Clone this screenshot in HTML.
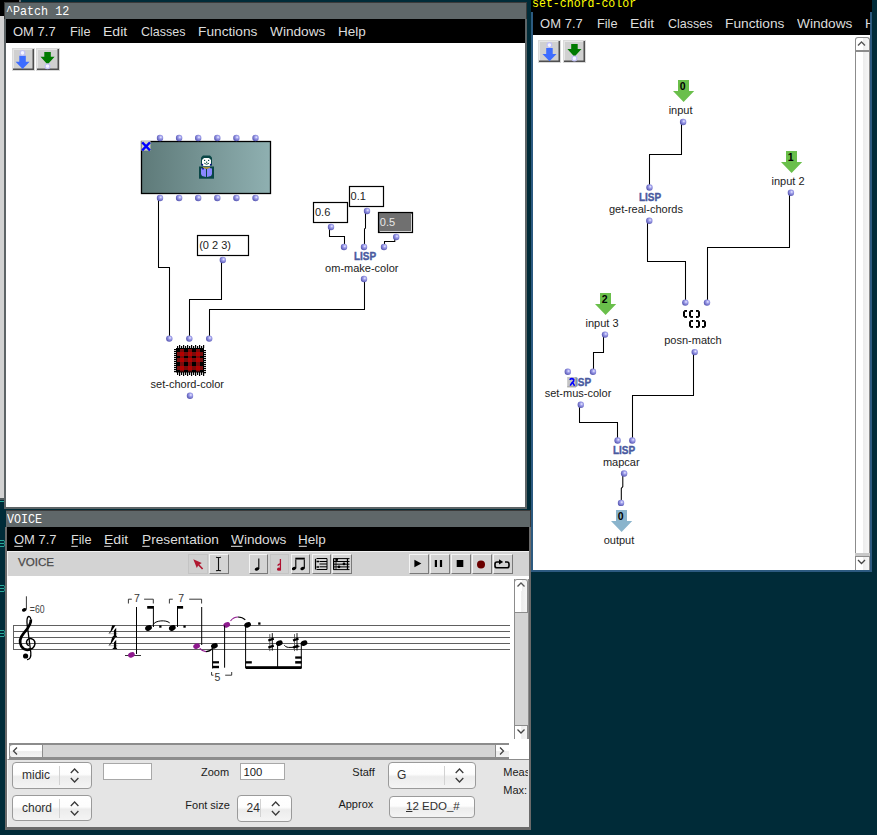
<!DOCTYPE html>
<html><head><meta charset="utf-8">
<style>
*{margin:0;padding:0;box-sizing:border-box}
html,body{width:877px;height:835px;overflow:hidden;background:#002b38;font-family:"Liberation Sans",sans-serif}
.a{position:absolute}
.t{position:absolute;white-space:nowrap;line-height:1}
.mono{font-family:"Liberation Mono",monospace}
.menu{color:#dcdcdc;font-size:13px}
.btn{position:absolute;background:#d0d0d0;border:1px solid #dadada;box-shadow:inset -1.5px -1.5px 0 #4e4e4e, inset 1px 1px 0 #e6e6e6}
.tb{position:absolute;background:#d4d4d4;border-top:1px solid #f4f4f4;border-left:1px solid #f4f4f4;border-right:1px solid #7a7a7a;border-bottom:1px solid #7a7a7a}
.tbp{position:absolute;background:#d0d0d0;border:1px solid #c4c4c4}
.lbl{color:#1e1e1e;font-size:12px}
.combo{position:absolute;border:1px solid #9a9a9a;border-radius:4px;background:linear-gradient(#ffffff 0%,#fdfdfd 45%,#ececec 55%,#f4f4f4 100%)}
</style></head><body>

<!-- top-left black strip -->
<div class="a" style="left:0;top:0;width:19px;height:16px;background:#000"></div>
<div class="a" style="left:19px;top:0;width:2px;height:3px;background:#6a7072"></div>
<div class="a" style="left:0;top:16px;width:4px;height:482px;background:#d2d2d2"></div>
<div class="a" style="left:0;top:498px;width:4px;height:1.5px;background:#505a5c"></div>
<div class="a" style="left:0;top:501px;width:4px;height:1px;background:#2aa89a"></div>

<!-- ================= PATCH 12 WINDOW ================= -->
<div class="a" style="left:4px;top:2px;width:523px;height:18px;background:#5f6769;border:1px solid #3a3a3a"></div>
<div class="t mono" style="left:6px;top:5px;font-size:13px;color:#fff;transform:scaleX(0.9);transform-origin:0 0">^Patch 12</div>
<div class="a" style="left:4px;top:19px;width:523px;height:489.7px;background:#5d6466"></div>
<div class="a" style="left:6px;top:19px;width:519px;height:24px;background:#000"></div>
<div class="a" style="left:6px;top:43px;width:519px;height:464px;background:#fff"></div>
<div class="t menu" style="left:13.0px;top:25px;transform:scaleX(1.0);transform-origin:0 0">OM 7.7</div>
<div class="t menu" style="left:70.0px;top:25px;transform:scaleX(0.98);transform-origin:0 0">File</div>
<div class="t menu" style="left:103.1px;top:25px;transform:scaleX(1.08);transform-origin:0 0">Edit</div>
<div class="t menu" style="left:141.0px;top:25px;transform:scaleX(0.96);transform-origin:0 0">Classes</div>
<div class="t menu" style="left:197.9px;top:25px;transform:scaleX(1.055);transform-origin:0 0">Functions</div>
<div class="t menu" style="left:270.0px;top:25px;transform:scaleX(1.05);transform-origin:0 0">Windows</div>
<div class="t menu" style="left:337.7px;top:25px;transform:scaleX(1.04);transform-origin:0 0">Help</div>
<div class="btn" style="left:11.5px;top:48.2px;width:23px;height:23.2px"></div>
<div class="btn" style="left:36.4px;top:48.2px;width:23.3px;height:23.2px"></div>

<!-- ================= RIGHT WINDOW set-chord-color ================= -->
<div class="a" style="left:531px;top:0;width:341px;height:12px;background:#000"></div>
<div class="t mono" style="left:532.3px;top:-2.5px;font-size:12.5px;color:#ffff00;transform:scaleX(0.925);transform-origin:0 0">set-chord-color</div>
<div class="a" style="left:531px;top:12px;width:341px;height:560px;background:#2c5a80"></div>
<div class="a" style="left:533px;top:12px;width:337px;height:23px;background:#000"></div>
<div class="a" style="left:533px;top:35px;width:337px;height:535px;background:#fff"></div>
<div class="t menu" style="left:540.1px;top:17px;transform:scaleX(1.0);transform-origin:0 0">OM 7.7</div>
<div class="t menu" style="left:597.1px;top:17px;transform:scaleX(0.98);transform-origin:0 0">File</div>
<div class="t menu" style="left:630.1999999999999px;top:17px;transform:scaleX(1.08);transform-origin:0 0">Edit</div>
<div class="t menu" style="left:668.0999999999999px;top:17px;transform:scaleX(0.96);transform-origin:0 0">Classes</div>
<div class="t menu" style="left:725.0px;top:17px;transform:scaleX(1.055);transform-origin:0 0">Functions</div>
<div class="t menu" style="left:797.0999999999999px;top:17px;transform:scaleX(1.05);transform-origin:0 0">Windows</div>
<div class="t menu" style="left:864.8px;top:17px;transform:scaleX(1.04);transform-origin:0 0;width:5.3px;overflow:hidden">Help</div>
<div class="btn" style="left:538.4px;top:40.4px;width:22.7px;height:22.7px"></div>
<div class="btn" style="left:563.4px;top:40.4px;width:22.9px;height:22.7px"></div>


<!-- ================= VOICE WINDOW ================= -->
<div class="a" style="left:6px;top:510px;width:524.7px;height:18px;background:#5f6769;border:1px solid #3a3a3a;border-left:none"></div>
<div class="t mono" style="left:7px;top:513px;font-size:13px;color:#fff;transform:scaleX(0.9);transform-origin:0 0">VOICE</div>
<div class="a" style="left:5px;top:527px;width:526px;height:303px;background:#6a6a6a"></div>
<div class="a" style="left:7px;top:527px;width:522px;height:24px;background:#000"></div>
<div class="t menu" style="left:13.9px;top:533px;transform:scaleX(1.0);transform-origin:0 0">OM 7.7</div>
<div class="t menu" style="left:70.89999999999999px;top:533px;transform:scaleX(0.98);transform-origin:0 0">File</div>
<div class="t menu" style="left:103.6px;top:533px;transform:scaleX(1.08);transform-origin:0 0">Edit</div>
<div class="t menu" style="left:141.6px;top:533px;transform:scaleX(1.053);transform-origin:0 0">Presentation</div>
<div class="t menu" style="left:230.6px;top:533px;transform:scaleX(1.05);transform-origin:0 0">Windows</div>
<div class="t menu" style="left:298.40000000000003px;top:533px;transform:scaleX(1.04);transform-origin:0 0">Help</div>
<!-- toolbar -->
<div class="a" style="left:7px;top:551px;width:522px;height:26px;background:#d3d3d3;border-top:1.5px solid #f0f0f0;border-left:1.5px solid #f0f0f0;border-bottom:1.5px solid #777"></div>
<div class="t" style="left:18px;top:556px;font-size:11.6px;color:#4a4a4a;-webkit-text-stroke:0.25px #4a4a4a">VOICE</div>
<div class="tb" style="left:209px;top:554px;width:19.5px;height:19.5px"></div>
<div class="tb" style="left:248.5px;top:554px;width:19.5px;height:19.5px"></div>
<div class="tb" style="left:290.5px;top:554px;width:19.5px;height:19.5px"></div>
<div class="tb" style="left:311.5px;top:554px;width:19.5px;height:19.5px"></div>
<div class="tb" style="left:332px;top:554px;width:19.5px;height:19.5px"></div>
<div class="tb" style="left:409px;top:554px;width:19.5px;height:19.5px"></div>
<div class="tb" style="left:430px;top:554px;width:19.5px;height:19.5px"></div>
<div class="tb" style="left:451px;top:554px;width:19.5px;height:19.5px"></div>
<div class="tb" style="left:472px;top:554px;width:19.5px;height:19.5px"></div>
<div class="tb" style="left:493px;top:554px;width:19.5px;height:19.5px"></div>
<div class="tbp" style="left:188px;top:554px;width:19.5px;height:19.5px"></div>
<div class="tbp" style="left:269.5px;top:554px;width:19.5px;height:19.5px"></div>
<!-- score area -->
<div class="a" style="left:7px;top:576px;width:522px;height:183px;background:#fff"></div>

<!-- VOICE vertical scrollbar -->
<div class="a" style="left:513.5px;top:578.5px;width:15px;height:160px;background:#d4d4d4;border-left:1.5px solid #8c8c8c;border-right:1.5px solid #8c8c8c"></div>
<div class="a" style="left:514px;top:578.5px;width:14px;height:13px;background:linear-gradient(90deg,#fff 55%,#ececec 60%,#f6f6f6);border:1.5px solid #8c8c8c;border-top-left-radius:3px;border-top-right-radius:3px"></div>
<div class="a" style="left:514px;top:591px;width:14px;height:21.5px;background:linear-gradient(90deg,#fff 50%,#ececec 55%,#f6f6f6);border:1.5px solid #8c8c8c;border-top:none"></div>
<div class="a" style="left:514px;top:725px;width:14px;height:13.5px;background:linear-gradient(90deg,#fff 50%,#ececec 55%,#f6f6f6);border:1.5px solid #8c8c8c;border-bottom:none"></div>
<!-- VOICE horizontal scrollbar -->
<div class="a" style="left:8.5px;top:743px;width:500.5px;height:16px;background:#d4d4d4;border-top:2px solid #8c8c8c;border-bottom:2px solid #8c8c8c"></div>
<div class="a" style="left:8.5px;top:743px;width:13px;height:16px;background:linear-gradient(#fff 45%,#ececec 55%,#f4f4f4);border:1.5px solid #8c8c8c;border-top-width:2px;border-bottom-width:2px;border-top-left-radius:4px;border-bottom-left-radius:4px"></div>
<div class="a" style="left:21px;top:743px;width:22px;height:16px;background:linear-gradient(#fff 45%,#ececec 55%,#f4f4f4);border:1.5px solid #8c8c8c;border-left:none;border-top-width:2px;border-bottom-width:2px"></div>
<div class="a" style="left:495px;top:743px;width:14px;height:16px;background:linear-gradient(#fff 45%,#ececec 55%,#f4f4f4);border-left:1.5px solid #8c8c8c;border-top:2px solid #8c8c8c;border-bottom:2px solid #8c8c8c"></div>
<!-- right window scrollbar -->
<div class="a" style="left:854.5px;top:36.5px;width:15px;height:533.5px;background:linear-gradient(90deg,#fff 50%,#ececec 55%,#f6f6f6);border-left:1.5px solid #8c8c8c;border-right:1.5px solid #8c8c8c;border-top-left-radius:3px;border-top-right-radius:3px;border-top:1.5px solid #8c8c8c"></div>
<div class="a" style="left:854.5px;top:50px;width:15px;height:1.5px;background:#8c8c8c"></div>
<div class="a" style="left:854.5px;top:553px;width:15px;height:2.5px;background:#c8c8c8"></div>
<div class="a" style="left:854.5px;top:555.5px;width:15px;height:1.2px;background:#8c8c8c"></div>

<!-- bottom panel -->
<div class="a" style="left:7px;top:759px;width:521.5px;height:68px;background:#e5e5e5;border-top:1.5px solid #8c8c8c;border-left:1.5px solid #f4f4f4"></div>
<div class="combo" style="left:12.2px;top:762.4px;width:79.4px;height:26.3px"></div>
<div class="a" style="left:59px;top:766px;width:1px;height:19px;background:#d2d2d2"></div>
<div class="t" style="left:22px;top:768.8px;font-size:12px;color:#303030">midic</div>
<div class="combo" style="left:12.2px;top:795.3px;width:79.4px;height:26.2px"></div>
<div class="a" style="left:59px;top:799px;width:1px;height:19px;background:#d2d2d2"></div>
<div class="t" style="left:22px;top:801.5px;font-size:12px;color:#303030">chord</div>
<div class="a" style="left:102.5px;top:762.7px;width:49.8px;height:17.5px;background:#fff;border:1.5px solid #a8a8a8"></div>
<div class="t" style="left:201px;top:766.7px;font-size:11px;color:#1a1a1a">Zoom</div>
<div class="a" style="left:239.9px;top:762.7px;width:45.6px;height:17.5px;background:#fff;border:1.5px solid #a8a8a8"></div>
<div class="t" style="left:243.5px;top:766.7px;font-size:11.3px;color:#1a1a1a">100</div>
<div class="t" style="left:185.3px;top:799.7px;font-size:11px;color:#1a1a1a">Font size</div>
<div class="combo" style="left:237.1px;top:794.9px;width:55.4px;height:26.7px"></div>
<div class="t" style="left:246.5px;top:802px;font-size:12px;color:#303030">24</div>
<div class="a" style="left:260.3px;top:799px;width:1px;height:18px;background:#d2d2d2"></div>
<div class="t" style="left:352.3px;top:766.7px;font-size:11px;color:#1a1a1a">Staff</div>
<div class="combo" style="left:387.5px;top:762.3px;width:88.9px;height:26.5px"></div>
<div class="a" style="left:444.3px;top:766px;width:1px;height:19px;background:#d2d2d2"></div>
<div class="t" style="left:397px;top:769px;font-size:12px;color:#303030">G</div>
<div class="t" style="left:338.4px;top:799.3px;font-size:11px;color:#1a1a1a">Approx</div>
<div class="combo" style="left:388.6px;top:795.6px;width:86.9px;height:22.1px"></div>
<div class="t" style="left:406px;top:800.5px;font-size:11.5px;color:#303030"><span style="text-decoration:underline">1</span>2 EDO_#</div>
<div class="t" style="left:503.3px;top:766.7px;font-size:11px;color:#1a1a1a;width:25px;overflow:hidden">Measure</div>
<div class="t" style="left:503.3px;top:784.9px;font-size:11px;color:#1a1a1a">Max:</div>


<svg class="a" style="left:0;top:0" width="877" height="835" viewBox="0 0 877 835">
<defs>
<radialGradient id="bg" cx="0.62" cy="0.38" r="0.62"><stop offset="0" stop-color="#eeeeff"/><stop offset="0.35" stop-color="#a4a4ee"/><stop offset="1" stop-color="#5a5ab4"/></radialGradient>
<linearGradient id="boxg" x1="0" x2="1" y1="0" y2="0"><stop offset="0" stop-color="#5e7a79"/><stop offset="1" stop-color="#8fb0b1"/></linearGradient>
</defs>
<g font-family="Liberation Sans" font-size="11" fill="#222">
<path d="M158.5 198 V267.5 H169.5 V338" fill="none" stroke="#000" stroke-width="1.05"/>
<path d="M221.5 260 V299.5 H189.5 V338" fill="none" stroke="#000" stroke-width="1.05"/>
<path d="M364.5 279 V309.5 H209.5 V338" fill="none" stroke="#000" stroke-width="1.05"/>
<path d="M329.5 227 V236.5 H344.5 V247" fill="none" stroke="#000" stroke-width="1.05"/>
<path d="M365.5 211 V228 L364.5 229 V247" fill="none" stroke="#000" stroke-width="1.05"/>
<path d="M394.8 237 V241.5 H384.5 V247" fill="none" stroke="#000" stroke-width="1.05"/>
<rect x="141.5" y="141.5" width="129" height="52" fill="url(#boxg)" stroke="#000" stroke-width="1.3"/>
<circle cx="160.0" cy="138" r="3.2" fill="url(#bg)"/>
<circle cx="160.0" cy="198" r="3.2" fill="url(#bg)"/>
<circle cx="179.1" cy="138" r="3.2" fill="url(#bg)"/>
<circle cx="179.1" cy="198" r="3.2" fill="url(#bg)"/>
<circle cx="198.2" cy="138" r="3.2" fill="url(#bg)"/>
<circle cx="198.2" cy="198" r="3.2" fill="url(#bg)"/>
<circle cx="217.3" cy="138" r="3.2" fill="url(#bg)"/>
<circle cx="217.3" cy="198" r="3.2" fill="url(#bg)"/>
<circle cx="236.4" cy="138" r="3.2" fill="url(#bg)"/>
<circle cx="236.4" cy="198" r="3.2" fill="url(#bg)"/>
<circle cx="255.5" cy="138" r="3.2" fill="url(#bg)"/>
<circle cx="255.5" cy="198" r="3.2" fill="url(#bg)"/>
<rect x="141.3" y="141" width="9.2" height="9.6" fill="#cfcfc4"/><path d="M142.2 142.4 L150 150.4 M150 142.4 L142.2 150.4" stroke="#0000ff" stroke-width="2.3"/>
<g>
<path d="M203 155.5 H210 L212 157.5 V165.5 H201 V157.5Z" fill="#0a4646"/>
<path d="M204 158 H209 L211 160 V164 L209.5 166 H203.5 L202 164 V160Z" fill="#fff"/>
<rect x="204" y="159.8" width="1.2" height="1.2" fill="#0a4646"/><rect x="208" y="159.8" width="1.2" height="1.2" fill="#0a4646"/>
<rect x="206" y="161.6" width="1.2" height="1.2" fill="#0a4646"/>
<path d="M204.2 163.2 Q206.6 165.4 209 163.2" stroke="#0a4646" stroke-width="0.9" fill="none"/>
<circle cx="202.3" cy="164.6" r="0.9" fill="#10108a"/><circle cx="210.8" cy="164.6" r="0.9" fill="#10108a"/>
<rect x="199" y="166.5" width="15" height="12.2" fill="#0a4646"/>
<rect x="203" y="167" width="7" height="2" fill="#a89038"/>
<path d="M201 168.5 L203.5 168 L206 169 V177 L202 176 L201 174Z" fill="#8a88ff"/>
<path d="M212 168.5 L209.5 168 L207 169 V177 L211 176 L212 174Z" fill="#8a88ff"/>
<rect x="202" y="168.2" width="2" height="1.2" fill="#10108a"/>
</g>
<rect x="197.5" y="235.5" width="51" height="20" fill="#fff" stroke="#000" stroke-width="1.2"/>
<text x="199.2" y="248.8" font-size="11" fill="#222">(0 2 3)</text>
<circle cx="222.8" cy="260" r="3.2" fill="url(#bg)"/>
<rect x="313.5" y="202.5" width="34" height="20" fill="#fff" stroke="#000" stroke-width="1.2"/>
<text x="315" y="215.6" font-size="11" fill="#222">0.6</text>
<circle cx="331" cy="227" r="3.2" fill="url(#bg)"/>
<rect x="349.5" y="186.5" width="34" height="20" fill="#fff" stroke="#000" stroke-width="1.2"/>
<text x="350.6" y="199.6" font-size="11" fill="#222">0.1</text>
<circle cx="367" cy="211" r="3.2" fill="url(#bg)"/>
<rect x="378.5" y="212.5" width="34" height="20" fill="#707070" stroke="#000" stroke-width="1.2"/>
<path d="M411.5 214 V231.5 H380" stroke="#d0d0d0" stroke-width="1" fill="none"/>
<text x="379.8" y="225.6" font-size="11" fill="#e8e8e8">0.5</text>
<circle cx="396.2" cy="237" r="3.2" fill="url(#bg)"/>
<circle cx="344" cy="247" r="3.2" fill="url(#bg)"/>
<circle cx="364" cy="247" r="3.2" fill="url(#bg)"/>
<circle cx="384" cy="247" r="3.2" fill="url(#bg)"/>
<text x="365" y="259.5" font-size="10" font-weight="bold" fill="#4a5aa0" stroke="#4a5aa0" stroke-width="0.35" text-anchor="middle">LISP</text>
<text x="361.8" y="271.5" font-size="11" fill="#222" text-anchor="middle">om-make-color</text>
<circle cx="364" cy="279" r="3.2" fill="url(#bg)"/>
<circle cx="169.3" cy="338.6" r="3.2" fill="url(#bg)"/>
<circle cx="189.3" cy="338.6" r="3.2" fill="url(#bg)"/>
<circle cx="209.2" cy="338.6" r="3.2" fill="url(#bg)"/>
<text x="187.3" y="388" font-size="11" fill="#222" text-anchor="middle">set-chord-color</text>
<circle cx="190" cy="395.7" r="3.2" fill="url(#bg)"/>
<g>
<rect x="174" y="346" width="32" height="28" fill="#fff"/>
<rect x="176" y="348" width="4" height="4" fill="#000"/>
<rect x="176" y="352" width="4" height="4" fill="#780c0c"/>
<rect x="176" y="356" width="4" height="2" fill="#000"/>
<rect x="176" y="358" width="4" height="4" fill="#780c0c"/>
<rect x="176" y="362" width="4" height="4" fill="#000"/>
<rect x="176" y="366" width="4" height="4" fill="#780c0c"/>
<rect x="176" y="370" width="4" height="2" fill="#000"/>
<rect x="180" y="348" width="4" height="4" fill="#780c0c"/>
<rect x="180" y="352" width="4" height="4" fill="#b40000"/>
<rect x="180" y="356" width="4" height="2" fill="#780c0c"/>
<rect x="180" y="358" width="4" height="4" fill="#b40000"/>
<rect x="180" y="362" width="4" height="4" fill="#780c0c"/>
<rect x="180" y="366" width="4" height="4" fill="#b40000"/>
<rect x="180" y="370" width="4" height="2" fill="#780c0c"/>
<rect x="184" y="348" width="4" height="4" fill="#000"/>
<rect x="184" y="352" width="4" height="4" fill="#780c0c"/>
<rect x="184" y="356" width="4" height="2" fill="#000"/>
<rect x="184" y="358" width="4" height="4" fill="#780c0c"/>
<rect x="184" y="362" width="4" height="4" fill="#000"/>
<rect x="184" y="366" width="4" height="4" fill="#780c0c"/>
<rect x="184" y="370" width="4" height="2" fill="#000"/>
<rect x="188" y="348" width="4" height="4" fill="#780c0c"/>
<rect x="188" y="352" width="4" height="4" fill="#b40000"/>
<rect x="188" y="356" width="4" height="2" fill="#780c0c"/>
<rect x="188" y="358" width="4" height="4" fill="#b40000"/>
<rect x="188" y="362" width="4" height="4" fill="#780c0c"/>
<rect x="188" y="366" width="4" height="4" fill="#b40000"/>
<rect x="188" y="370" width="4" height="2" fill="#780c0c"/>
<rect x="192" y="348" width="4" height="4" fill="#000"/>
<rect x="192" y="352" width="4" height="4" fill="#780c0c"/>
<rect x="192" y="356" width="4" height="2" fill="#000"/>
<rect x="192" y="358" width="4" height="4" fill="#780c0c"/>
<rect x="192" y="362" width="4" height="4" fill="#000"/>
<rect x="192" y="366" width="4" height="4" fill="#780c0c"/>
<rect x="192" y="370" width="4" height="2" fill="#000"/>
<rect x="196" y="348" width="4" height="4" fill="#780c0c"/>
<rect x="196" y="352" width="4" height="4" fill="#b40000"/>
<rect x="196" y="356" width="4" height="2" fill="#780c0c"/>
<rect x="196" y="358" width="4" height="4" fill="#b40000"/>
<rect x="196" y="362" width="4" height="4" fill="#780c0c"/>
<rect x="196" y="366" width="4" height="4" fill="#b40000"/>
<rect x="196" y="370" width="4" height="2" fill="#780c0c"/>
<rect x="200" y="348" width="4" height="4" fill="#000"/>
<rect x="200" y="352" width="4" height="4" fill="#780c0c"/>
<rect x="200" y="356" width="4" height="2" fill="#000"/>
<rect x="200" y="358" width="4" height="4" fill="#780c0c"/>
<rect x="200" y="362" width="4" height="4" fill="#000"/>
<rect x="200" y="366" width="4" height="4" fill="#780c0c"/>
<rect x="200" y="370" width="4" height="2" fill="#000"/>
<rect x="176.5" y="348.5" width="27" height="23.5" fill="none" stroke="#000" stroke-width="1"/>
<rect x="177" y="346" width="1.2" height="2" fill="#000"/>
<rect x="177" y="372" width="1.2" height="3" fill="#000"/>
<rect x="179" y="345" width="1.2" height="3" fill="#000"/>
<rect x="179" y="372" width="1.2" height="4" fill="#000"/>
<rect x="181" y="346" width="1.2" height="2" fill="#000"/>
<rect x="181" y="372" width="1.2" height="3" fill="#000"/>
<rect x="183" y="345" width="1.2" height="3" fill="#000"/>
<rect x="183" y="372" width="1.2" height="4" fill="#000"/>
<rect x="185" y="346" width="1.2" height="2" fill="#000"/>
<rect x="185" y="372" width="1.2" height="3" fill="#000"/>
<rect x="187" y="345" width="1.2" height="3" fill="#000"/>
<rect x="187" y="372" width="1.2" height="4" fill="#000"/>
<rect x="189" y="346" width="1.2" height="2" fill="#000"/>
<rect x="189" y="372" width="1.2" height="3" fill="#000"/>
<rect x="191" y="345" width="1.2" height="3" fill="#000"/>
<rect x="191" y="372" width="1.2" height="4" fill="#000"/>
<rect x="193" y="346" width="1.2" height="2" fill="#000"/>
<rect x="193" y="372" width="1.2" height="3" fill="#000"/>
<rect x="195" y="345" width="1.2" height="3" fill="#000"/>
<rect x="195" y="372" width="1.2" height="4" fill="#000"/>
<rect x="197" y="346" width="1.2" height="2" fill="#000"/>
<rect x="197" y="372" width="1.2" height="3" fill="#000"/>
<rect x="199" y="345" width="1.2" height="3" fill="#000"/>
<rect x="199" y="372" width="1.2" height="4" fill="#000"/>
<rect x="201" y="346" width="1.2" height="2" fill="#000"/>
<rect x="201" y="372" width="1.2" height="3" fill="#000"/>
<rect x="203" y="345" width="1.2" height="3" fill="#000"/>
<rect x="203" y="372" width="1.2" height="4" fill="#000"/>
<rect x="174" y="349" width="2.5" height="1.2" fill="#000"/>
<rect x="203.5" y="350" width="2.5" height="1.2" fill="#000"/>
<rect x="174" y="351" width="2.5" height="1.2" fill="#000"/>
<rect x="203.5" y="352" width="2.5" height="1.2" fill="#000"/>
<rect x="174" y="353" width="2.5" height="1.2" fill="#000"/>
<rect x="203.5" y="354" width="2.5" height="1.2" fill="#000"/>
<rect x="174" y="355" width="2.5" height="1.2" fill="#000"/>
<rect x="203.5" y="356" width="2.5" height="1.2" fill="#000"/>
<rect x="174" y="357" width="2.5" height="1.2" fill="#000"/>
<rect x="203.5" y="358" width="2.5" height="1.2" fill="#000"/>
<rect x="174" y="359" width="2.5" height="1.2" fill="#000"/>
<rect x="203.5" y="360" width="2.5" height="1.2" fill="#000"/>
<rect x="174" y="361" width="2.5" height="1.2" fill="#000"/>
<rect x="203.5" y="362" width="2.5" height="1.2" fill="#000"/>
<rect x="174" y="363" width="2.5" height="1.2" fill="#000"/>
<rect x="203.5" y="364" width="2.5" height="1.2" fill="#000"/>
<rect x="174" y="365" width="2.5" height="1.2" fill="#000"/>
<rect x="203.5" y="366" width="2.5" height="1.2" fill="#000"/>
<rect x="174" y="367" width="2.5" height="1.2" fill="#000"/>
<rect x="203.5" y="368" width="2.5" height="1.2" fill="#000"/>
<rect x="174" y="369" width="2.5" height="1.2" fill="#000"/>
<rect x="203.5" y="370" width="2.5" height="1.2" fill="#000"/>
<rect x="174" y="371" width="2.5" height="1.2" fill="#000"/>
<rect x="203.5" y="372" width="2.5" height="1.2" fill="#000"/>
</g>
<path d="M681.5 122 V154.5 H649.5 V188" fill="none" stroke="#000" stroke-width="1.05"/>
<path d="M647.5 221 V261.5 H685.5 V303" fill="none" stroke="#000" stroke-width="1.05"/>
<path d="M789.5 193 V247.5 H707.5 V303" fill="none" stroke="#000" stroke-width="1.05"/>
<path d="M603.5 335 V352.5 H593.5 V372" fill="none" stroke="#000" stroke-width="1.05"/>
<path d="M693.5 352 V395.5 H632.5 V441" fill="none" stroke="#000" stroke-width="1.05"/>
<path d="M579.5 405 V422.5 H617.5 V441" fill="none" stroke="#000" stroke-width="1.05"/>
<path d="M622.8 474 V486.5 L621.3 488.5 V503" fill="none" stroke="#000" stroke-width="1.05"/>
<path d="M678 80 H689 V91 H694.2 L683.6 102 L673 91 H678Z" fill="#6abf4b"/><text x="682.6" y="89.8" font-size="10.5" font-weight="bold" fill="#000" text-anchor="middle">0</text>
<text x="680.6" y="114" font-size="11" text-anchor="middle">input</text>
<circle cx="683.1" cy="122" r="3.2" fill="url(#bg)"/>
<circle cx="649.5" cy="187.5" r="3.2" fill="url(#bg)"/>
<text x="650" y="201" font-size="10" font-weight="bold" fill="#4a5aa0" stroke="#4a5aa0" stroke-width="0.35" text-anchor="middle">LISP</text>
<text x="646" y="213" font-size="11" text-anchor="middle">get-real-chords</text>
<circle cx="649.3" cy="220.8" r="3.2" fill="url(#bg)"/>
<path d="M786 151 H797 V162 H802.2 L791.6 173 L781 162 H786Z" fill="#6abf4b"/><text x="790.6" y="160.8" font-size="10.5" font-weight="bold" fill="#000" text-anchor="middle">1</text>
<text x="788" y="185" font-size="11" text-anchor="middle">input 2</text>
<circle cx="790.9" cy="192.7" r="3.2" fill="url(#bg)"/>
<circle cx="685.3" cy="302.6" r="3.2" fill="url(#bg)"/>
<circle cx="707" cy="302.6" r="3.2" fill="url(#bg)"/>
<rect x="684.2" y="310" width="2.8" height="1.9" fill="#000"/><rect x="683" y="311.3" width="2" height="5.4" fill="#000"/><rect x="684.2" y="316" width="2.8" height="1.9" fill="#000"/><rect x="690.2" y="310" width="2.8" height="1.9" fill="#000"/><rect x="689" y="311.3" width="2" height="5.4" fill="#000"/><rect x="690.2" y="316" width="2.8" height="1.9" fill="#000"/><rect x="696" y="310" width="2.8" height="1.9" fill="#000"/><rect x="698" y="311.3" width="2" height="5.4" fill="#000"/><rect x="696" y="316" width="2.8" height="1.9" fill="#000"/>
<rect x="690.2" y="320" width="2.8" height="1.9" fill="#000"/><rect x="689" y="321.3" width="2" height="5.4" fill="#000"/><rect x="690.2" y="326" width="2.8" height="1.9" fill="#000"/><rect x="696" y="320" width="2.8" height="1.9" fill="#000"/><rect x="698" y="321.3" width="2" height="5.4" fill="#000"/><rect x="696" y="326" width="2.8" height="1.9" fill="#000"/><rect x="702" y="320" width="2.8" height="1.9" fill="#000"/><rect x="704" y="321.3" width="2" height="5.4" fill="#000"/><rect x="702" y="326" width="2.8" height="1.9" fill="#000"/>
<text x="693" y="344" font-size="11" text-anchor="middle">posn-match</text>
<circle cx="694.7" cy="352.1" r="3.2" fill="url(#bg)"/>
<path d="M600 293 H611 V304 H616.2 L605.6 315 L595 304 H600Z" fill="#6abf4b"/><text x="604.6" y="302.8" font-size="10.5" font-weight="bold" fill="#000" text-anchor="middle">2</text>
<text x="602" y="327" font-size="11" text-anchor="middle">input 3</text>
<circle cx="605" cy="334.6" r="3.2" fill="url(#bg)"/>
<circle cx="567.8" cy="371.8" r="3.2" fill="url(#bg)"/>
<circle cx="593" cy="371.8" r="3.2" fill="url(#bg)"/>
<text x="580" y="385.5" font-size="10" font-weight="bold" fill="#4a5aa0" stroke="#4a5aa0" stroke-width="0.35" text-anchor="middle">LISP</text>
<rect x="567.2" y="377" width="9.3" height="9.9" fill="#c4c4c4"/><path d="M576 377 V386.9 H567.2" stroke="#8a8a8a" stroke-width="0.8" fill="none"/><path d="M569.6 379.8 Q571.8 377.6 573.8 379.6 Q574.2 381.4 571.8 383 L570.2 385.6 M573 383.2 L574.6 385.8" stroke="#0000ff" stroke-width="1.6" fill="none"/>
<text x="578" y="397" font-size="11" text-anchor="middle">set-mus-color</text>
<circle cx="580.8" cy="404.8" r="3.2" fill="url(#bg)"/>
<circle cx="617.6" cy="440.5" r="3.2" fill="url(#bg)"/>
<circle cx="632.3" cy="440.5" r="3.2" fill="url(#bg)"/>
<text x="624" y="453.5" font-size="10" font-weight="bold" fill="#4a5aa0" stroke="#4a5aa0" stroke-width="0.35" text-anchor="middle">LISP</text>
<text x="621.3" y="466" font-size="11" text-anchor="middle">mapcar</text>
<circle cx="624.1" cy="473.5" r="3.2" fill="url(#bg)"/>
<circle cx="621" cy="502.9" r="3.2" fill="url(#bg)"/>
<path d="M616 510 H627 V521 H632.2 L621.6 532 L611 521 H616Z" fill="#8ab4cc"/><text x="620.6" y="519.8" font-size="10.5" font-weight="bold" fill="#000" text-anchor="middle">0</text>
<text x="619" y="544" font-size="11" text-anchor="middle">output</text>
<path d="M193.3 559.3 L196.8 568 L198.2 565.6 L202 569.6 L203.2 568.4 L199.4 564.4 L201.8 563 Z" fill="#b01830"/>
<path d="M218.5 557.5 V570.5 M216 557.3 Q218.5 558 221 557.3 M216 570.7 Q218.5 570 221 570.7" stroke="#111" stroke-width="1.1" fill="none"/>
<path d="M258.8 558.5 V569" stroke="#000" stroke-width="1.1"/><ellipse cx="257" cy="569" rx="2.3" ry="1.6" transform="rotate(-20 257 569)" fill="#000"/>
<path d="M280.4 559 V570.5" stroke="#b01030" stroke-width="1.3"/><path d="M280.6 563.2 Q277.2 563.2 277.4 565.8 L278.4 566 Q278.6 564.6 280.6 564.8Z" fill="#b01030"/><ellipse cx="278.9" cy="569.2" rx="1.9" ry="1.6" fill="#b01030"/>
<path d="M295.8 559.5 V568.5 M304.3 559.5 V568.5" stroke="#000" stroke-width="1.1"/><path d="M295.3 558.6 H304.8" stroke="#000" stroke-width="1.8"/><ellipse cx="294" cy="568.6" rx="2.2" ry="1.6" transform="rotate(-20 294 568.6)" fill="#000"/><ellipse cx="302.5" cy="568.6" rx="2.2" ry="1.6" transform="rotate(-20 302.5 568.6)" fill="#000"/>
<g stroke="#000" fill="none" stroke-width="1"><path d="M316.5 558.5 H327 V569.5 H316.5"/><path d="M319.5 561.5 H327 M319.5 564 H327 M319.5 566.8 H327" /><path d="M315.5 558.8 V569.5" stroke-width="1.2"/></g><path d="M316.5 561.5 H319 M316.5 567 H319" stroke="#000" stroke-width="1.6"/>
<g stroke="#000" fill="none" stroke-width="1"><path d="M333.5 558.6 H349.5 M333.5 561.5 H349.5 M333.5 564.2 H349.5 M333.5 566.9 H349.5 M333.5 569.6 H349.5"/><path d="M333.6 558.5 V569.8 M347.5 558.5 V569.8" stroke-width="1.3"/><path d="M336 558.5 V569.8" stroke-width="0.8"/></g><circle cx="336.8" cy="559.8" r="1.3" fill="#000"/><circle cx="339" cy="566.8" r="1.4" fill="#000"/><circle cx="344" cy="563.9" r="1.4" fill="#000"/>
<path d="M414.4 559.7 L421.4 563.5 L414.4 567.3Z" fill="#000"/>
<rect x="434.8" y="560" width="2.2" height="7" fill="#000"/><rect x="439.9" y="560" width="2.2" height="7" fill="#000"/>
<rect x="456.7" y="560" width="6.6" height="7" fill="#000"/>
<circle cx="481" cy="564.4" r="4" fill="#6a0000"/>
<path d="M500 562 H497 Q495 562 495 564 V566 Q495 567.8 497 567.8 H507 Q509 567.8 509 566 V564 Q509 562 507 562 H505" fill="none" stroke="#000" stroke-width="1.6"/><path d="M499 559.2 L503.2 562 L499 564.6Z" fill="#000"/>
<g id="score">
<g stroke="#606060" stroke-width="1"><path d="M13 625.5 H510"/><path d="M13 631.5 H510"/><path d="M13 637.5 H510"/><path d="M13 643.5 H510"/><path d="M13 649.5 H510"/><path d="M13.5 625 V650"/></g>
<path d="M30.8 619.5 C31.6 624.5 27.2 629 23.6 633.4 C20.2 637.4 18.9 642 21.4 646.4 C23.4 649.6 27.4 650.2 30.6 649.2" fill="none" stroke="#000" stroke-width="2.7"/><path d="M30.6 649.2 C34 648 35.6 644.6 34.7 641.5 C33.7 638.4 29.6 637.6 27.5 639.8 C25.7 641.8 26.4 644.8 29 645.6" fill="none" stroke="#000" stroke-width="1.5"/><path d="M30.8 619.5 C30.7 616.6 28.7 615.6 27.6 617.4 C26.5 619.4 26.8 624 28 631 L30.8 652.5 C31.2 657 30 659.8 27 659.6" fill="none" stroke="#000" stroke-width="1.3"/>
<circle cx="25.6" cy="656" r="2.6" fill="#000"/>
<path d="M26.4 596.3 V609.5" stroke="#222" stroke-width="0.9"/><ellipse cx="24.2" cy="609.9" rx="2.3" ry="1.7" transform="rotate(-20 24.2 609.9)" fill="#000"/>
<text x="29.8" y="613" font-size="10" fill="#444" textLength="14.8" lengthAdjust="spacingAndGlyphs">=60</text>
<g transform="translate(0 0)"><path d="M112.2 625.2 H115.6 L111.5 631.3 L110.6 630.7 Z" fill="#000"/><path d="M111 631 L109.2 633.5" stroke="#000" stroke-width="1"/><path d="M109.2 633.7 H117.4" stroke="#aaa" stroke-width="0.8"/><path d="M113.9 630.6 L116.2 627.8 V635.4 L117.3 637.1 H112.2 L113.9 635.4 Z" fill="#000"/></g>
<g transform="translate(0 12)"><path d="M112.2 625.2 H115.6 L111.5 631.3 L110.6 630.7 Z" fill="#000"/><path d="M111 631 L109.2 633.5" stroke="#000" stroke-width="1"/><path d="M109.2 633.7 H117.4" stroke="#aaa" stroke-width="0.8"/><path d="M113.9 630.6 L116.2 627.8 V635.4 L117.3 637.1 H112.2 L113.9 635.4 Z" fill="#000"/></g>
<path d="M125 655.5 H141" stroke="#333" stroke-width="1" fill="none"/>
<ellipse cx="131.4" cy="654.8" rx="3.5" ry="2.6" transform="rotate(-24 131.4 654.8)" fill="#8e1a8e"/>
<path d="M136.5 654 V607" stroke="#000" stroke-width="1" fill="none"/>
<ellipse cx="148.5" cy="628" rx="3.5" ry="2.6" transform="rotate(-24 148.5 628)" fill="#000"/>
<path d="M153.4 627 V606" stroke="#000" stroke-width="1" fill="none"/>
<rect x="147.2" y="606" width="6.2" height="2.7" fill="#000"/>
<rect x="159.2" y="625.4" width="2.3" height="2.3" fill="#000"/>
<ellipse cx="172.3" cy="628" rx="3.5" ry="2.6" transform="rotate(-24 172.3 628)" fill="#000"/>
<path d="M177.5 627 V606" stroke="#000" stroke-width="1" fill="none"/>
<rect x="177.5" y="606" width="5.6" height="2.7" fill="#000"/>
<rect x="183.4" y="625.4" width="2.3" height="2.3" fill="#000"/>
<path d="M153.3 624.4 C155 620.5 166 619.5 169.7 622.9" stroke="#000" stroke-width="1" fill="none"/>
<path d="M128.4 603.5 V599.2 H131.8 M144.1 599.2 H153.3 V603.5" stroke="#222" stroke-width="0.9" fill="none"/>
<text x="134" y="602" font-size="10.5" fill="#333">7</text>
<path d="M169.4 603.5 V599.2 H172.8 M189.2 599.2 H201.6 V603.5" stroke="#222" stroke-width="0.9" fill="none"/>
<text x="178.3" y="602" font-size="10.5" fill="#333">7</text>
<ellipse cx="196.6" cy="646.1" rx="3.5" ry="2.6" transform="rotate(-24 196.6 646.1)" fill="#8e1a8e"/>
<path d="M201.7 645 V607" stroke="#000" stroke-width="1" fill="none"/>
<path d="M199.8 648.4 C201.5 650.6 203.5 651.4 206 651.6" stroke="#8e1a8e" stroke-width="1.1" fill="none"/><path d="M206 651.6 C208.5 651.6 210.5 650.6 212.2 648.6" stroke="#000" stroke-width="1.1" fill="none"/>
<ellipse cx="214.4" cy="645.8" rx="3.5" ry="2.6" transform="rotate(-24 214.4 645.8)" fill="#000"/>
<path d="M212.6 646.5 V668.5" stroke="#000" stroke-width="1" fill="none"/>
<rect x="212.6" y="661.2" width="6.4" height="2.2" fill="#000"/><rect x="212.6" y="665.8" width="6.4" height="2.4" fill="#000"/>
<ellipse cx="226.7" cy="624.9" rx="3.5" ry="2.6" transform="rotate(-24 226.7 624.9)" fill="#8e1a8e"/>
<path d="M224.6 625.5 V667.7" stroke="#000" stroke-width="1" fill="none"/>
<path d="M211.6 672 V675.2 H213.5 M225.2 675.2 H231.7 V672" stroke="#222" stroke-width="0.9" fill="none"/>
<text x="214.6" y="680.9" font-size="10.5" fill="#333">5</text>
<path d="M230.5 621 C232.5 618.2 235 617 238 617" stroke="#8e1a8e" stroke-width="1.1" fill="none"/><path d="M238 617 C241 617 243.5 618 245.3 619.8" stroke="#000" stroke-width="1.1" fill="none"/>
<ellipse cx="247.6" cy="624.9" rx="3.5" ry="2.6" transform="rotate(-24 247.6 624.9)" fill="#000"/>
<path d="M245.6 625.5 V668" stroke="#000" stroke-width="1" fill="none"/>
<rect x="258.2" y="622.4" width="2.3" height="2.3" fill="#000"/>
<rect x="245.6" y="666.2" width="56" height="2.8" fill="#000"/><rect x="245.6" y="661.2" width="6.2" height="2.3" fill="#000"/>
<path d="M269.8 634.1 V651.1" stroke="#444" stroke-width="0.8" fill="none"/><path d="M272.3 633.1 V650.6" stroke="#000" stroke-width="0.9" fill="none"/><path d="M268.3 640.5 L273.8 638.7 M268.3 647.5 L273.8 645.7" stroke="#000" stroke-width="2.3" fill="none"/>
<ellipse cx="279.3" cy="643.1" rx="3.5" ry="2.6" transform="rotate(-24 279.3 643.1)" fill="#000"/>
<path d="M277.6 643.5 V667.5" stroke="#000" stroke-width="1" fill="none"/>
<path d="M284.3 645.3 C286 647.3 288 647.5 290 647.4 L296 647.3 C297.5 647.2 298.8 646.8 299.6 646.3" stroke="#000" stroke-width="1" fill="none"/>
<path d="M294.5 634.1 V651.1" stroke="#444" stroke-width="0.8" fill="none"/><path d="M297.0 633.1 V650.6" stroke="#000" stroke-width="0.9" fill="none"/><path d="M293.0 640.5 L298.5 638.7 M293.0 647.5 L298.5 645.7" stroke="#000" stroke-width="2.3" fill="none"/>
<ellipse cx="304" cy="643.1" rx="3.5" ry="2.6" transform="rotate(-24 304 643.1)" fill="#000"/>
<path d="M301.3 643.5 V668" stroke="#000" stroke-width="1" fill="none"/>
<rect x="295.2" y="656.4" width="6.4" height="2.3" fill="#000"/><rect x="295.2" y="661.1" width="6.4" height="2.5" fill="#000"/>
</g>
<path d="M517.5 586.5 L521 583.0 L524.5 586.5" stroke="#555" stroke-width="1.3" fill="none"/>
<path d="M517.5 729.5 L521 733.0 L524.5 729.5" stroke="#444" stroke-width="1.3" fill="none"/>
<path d="M17 747.5 L13.5 751 L17 754.5" stroke="#444" stroke-width="1.3" fill="none"/>
<path d="M500 747.5 L503.5 751 L500 754.5" stroke="#444" stroke-width="1.3" fill="none"/>
<path d="M858.0 45.5 L861.5 42.0 L865.0 45.5" stroke="#555" stroke-width="1.3" fill="none"/>
<path d="M858.0 560 L861.5 563.5 L865.0 560" stroke="#444" stroke-width="1.3" fill="none"/>
<path d="M70.8 773.0 L74.6 769.0 L78.39999999999999 773.0" stroke="#3a3a3a" stroke-width="1.3" fill="none"/><path d="M70.8 778.0 L74.6 782.0 L78.39999999999999 778.0" stroke="#3a3a3a" stroke-width="1.3" fill="none"/>
<path d="M70.8 806.0 L74.6 802.0 L78.39999999999999 806.0" stroke="#3a3a3a" stroke-width="1.3" fill="none"/><path d="M70.8 811.0 L74.6 815.0 L78.39999999999999 811.0" stroke="#3a3a3a" stroke-width="1.3" fill="none"/>
<path d="M271.9 806.0 L275.7 802.0 L279.5 806.0" stroke="#3a3a3a" stroke-width="1.3" fill="none"/><path d="M271.9 811.0 L275.7 815.0 L279.5 811.0" stroke="#3a3a3a" stroke-width="1.3" fill="none"/>
<path d="M455.7 773.0 L459.5 769.0 L463.3 773.0" stroke="#3a3a3a" stroke-width="1.3" fill="none"/><path d="M455.7 778.0 L459.5 782.0 L463.3 778.0" stroke="#3a3a3a" stroke-width="1.3" fill="none"/>
<g transform="translate(0 0)"><path d="M19.3 55.7 H25.8 V61.8 H29.6 L22.6 69 L15.6 61.8 H19.3Z" fill="#3d6cff"/><circle cx="22.5" cy="52.9" r="2.4" fill="#f4f4ff" stroke="#c0c0f4" stroke-width="1.2"/><path d="M44.3 51.9 H50.8 V56.7 H54.6 L47.55 64.6 L40.5 56.7 H44.3Z" fill="#007a00"/><circle cx="47.5" cy="66.2" r="2.4" fill="#f4f4ff" stroke="#c0c0f4" stroke-width="1.2"/></g>
<g transform="translate(526.9 -7.8)"><path d="M19.3 55.7 H25.8 V61.8 H29.6 L22.6 69 L15.6 61.8 H19.3Z" fill="#3d6cff"/><circle cx="22.5" cy="52.9" r="2.4" fill="#f4f4ff" stroke="#c0c0f4" stroke-width="1.2"/><path d="M44.3 51.9 H50.8 V56.7 H54.6 L47.55 64.6 L40.5 56.7 H44.3Z" fill="#007a00"/><circle cx="47.5" cy="66.2" r="2.4" fill="#f4f4ff" stroke="#c0c0f4" stroke-width="1.2"/></g>
<path d="M0 540.5 H4 L4.6 541.5 V542.5 L4 543.5 H0 M4 543.5 L4.6 544.5 V545.5 L4 546.5 H0" stroke="#2aa89a" stroke-width="1" fill="none"/><path d="M0 585.5 H4 L4.6 586.5 V587.5 L4 588.5 H0 M4 588.5 L4.6 589.5 V590.5 L4 591.5 H0" stroke="#2aa89a" stroke-width="1" fill="none"/><path d="M0 630.5 H4 L4.6 631.5 V632.5 L4 633.5 H0 M4 633.5 L4.6 634.5 V635.5 L4 636.5 H0" stroke="#2aa89a" stroke-width="1" fill="none"/>
<rect x="14.3" y="545.8" width="8.5" height="1" fill="#e6e6e6"/>
<rect x="71.3" y="545.8" width="6.5" height="1" fill="#e6e6e6"/>
<rect x="104.2" y="545.8" width="7" height="1" fill="#e6e6e6"/>
<rect x="142.2" y="545.8" width="7.5" height="1" fill="#e6e6e6"/>
<rect x="231" y="545.8" width="11.5" height="1" fill="#e6e6e6"/>
<rect x="298.8" y="545.8" width="8" height="1" fill="#e6e6e6"/>
</g></svg>
</body></html>
